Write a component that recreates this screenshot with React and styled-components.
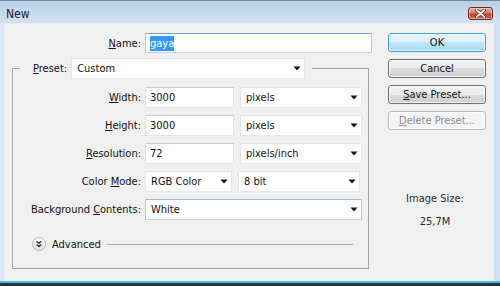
import React from 'react';
import styled, { createGlobalStyle } from 'styled-components';

const Global = createGlobalStyle`
  html, body { margin: 0; padding: 0; background: #fff; }
  body {
    font-family: "DejaVu Sans Condensed", "DejaVu Sans", sans-serif;
    font-stretch: condensed;
    font-size: 11px;
    color: #111;
  }
  * { box-sizing: border-box; }
`;

const Window = styled.div`
  width: 500px;
  height: 286px;
  display: flex;
  flex-direction: column;
  background: #c6d9ee;
  border-top: 1px solid #7b8794;
  overflow: hidden;
`;

const TitleBar = styled.div`
  height: 22px;
  flex: none;
  display: flex;
  align-items: center;
  justify-content: space-between;
  padding: 3px 7px 0 6px;
  background: linear-gradient(#b9d0e9, #d3e2f2);
`;

const Title = styled.span`
  font-family: "DejaVu Sans", sans-serif;
  font-stretch: condensed;
  font-size: 12px;
  color: #1a1a1a;
`;

const CloseButton = styled.div`
  width: 25px;
  height: 13px;
  border: 1px solid #6e2b22;
  border-radius: 3px;
  background: linear-gradient(#e8b2a6 0%, #d27a6a 45%, #c1432f 55%, #d46a4c 100%);
  box-shadow: inset 0 0 0 1px rgba(255, 220, 210, 0.5);
  display: flex;
  align-items: center;
  justify-content: center;
`;

const Frame = styled.div`
  flex: 1;
  display: flex;
  padding: 0 7px 0 4px;
  background: linear-gradient(90deg, #dbe8f5, #cfe0f1);
`;

const Content = styled.div`
  flex: 1;
  display: flex;
  gap: 16px;
  padding: 9px 7px 0 7px;
  background: #f0f0f0;
  border: 1px solid #e6edf4;
  border-bottom: none;
`;

const BottomEdge = styled.div`
  height: 5px;
  flex: none;
  border-top: 2px solid #3cc4ee;
  background: #2f3236;
`;

const LeftCol = styled.div`
  width: 360px;
  display: flex;
  flex-direction: column;
`;

const RightCol = styled.div`
  width: 98px;
  display: flex;
  flex-direction: column;
  gap: 7px;
`;

const NameRow = styled.div`
  display: flex;
  align-items: center;
  height: 20px;
`;

const Label = styled.label`
  width: ${(p) => p.$width || 128}px;
  flex: none;
  text-align: right;
  margin-right: 4px;
  white-space: nowrap;
`;

const TextBox = styled.div`
  width: ${(p) => p.$width}px;
  height: ${(p) => p.$height || 21}px;
  flex: none;
  display: flex;
  align-items: center;
  padding-left: 4px;
  background: #fff;
  border: 1px solid;
  border-color: ${(p) =>
    p.$focused ? '#6fa6d9 #a9cdee #b5d5f1 #a9cdee' : '#c9c9c9 #e3e3e3 #e6e6e6 #e0e0e0'};
  white-space: nowrap;
`;

const Selected = styled.span`
  background: #3399ff;
  color: #fff;
  padding: 1px 0;
`;

const Select = styled.div`
  width: ${(p) => p.$width}px;
  height: 21px;
  flex: none;
  display: flex;
  align-items: center;
  justify-content: space-between;
  padding: 0 3px 0 5px;
  background: #fff;
  border: 1px solid;
  border-color: ${(p) =>
    p.$active ? '#8ebde6 #a9cdee #b5d5f1 #a9cdee' : '#e4e4e4 #e6e6e6 #e8e8e8 #e4e4e4'};
  white-space: nowrap;
`;

const Arrow = () => (
  <svg width="8" height="5" viewBox="0 0 8 5">
    <path d="M0.5 0.5 H7.5 L4 4.5 Z" fill="#111" />
  </svg>
);

const Group = styled.fieldset`
  margin: 5px 0 0 0;
  width: 357px;
  padding: 8px 6px 17px 0;
  border: 1px solid #a3a3a3;
  min-width: 0;
`;

const Legend = styled.legend`
  margin-left: 7px;
  padding: 0 7px 0 13px;
`;

const LegendInner = styled.div`
  display: flex;
  align-items: center;
  gap: 4px;
  height: 21px;
`;

const Rows = styled.div`
  display: flex;
  flex-direction: column;
  gap: 7px;
`;

const Row = styled.div`
  display: flex;
  align-items: center;
  height: 21px;
`;

const Fields = styled.div`
  display: flex;
  gap: 6px;
`;

const AdvancedRow = styled.div`
  margin-top: 17px;
  padding: 0 9px 0 19px;
  height: 14px;
  display: flex;
  align-items: center;
  gap: 6px;
`;

const Rule = styled.div`
  flex: 1;
  height: 1px;
  background: #a8a8a8;
  margin-left: 0;
`;

const Button = styled.div`
  height: 19px;
  display: flex;
  align-items: center;
  justify-content: center;
  border-radius: 3px;
  border: 1px solid ${(p) => (p.$default ? '#3c9fd6' : p.$disabled ? '#b5b9bc' : '#707070')};
  color: ${(p) => (p.$disabled ? '#8d8d8d' : '#111')};
  background: ${(p) =>
    p.$default
      ? 'linear-gradient(#eaf6fd 0%, #d9f0fc 50%, #bee6fd 50%, #a7d9f5 100%)'
      : p.$disabled
      ? '#f4f4f4'
      : 'linear-gradient(#f2f2f2 0%, #ebebeb 50%, #dddddd 50%, #cfcfcf 100%)'};
  box-shadow: inset 0 0 0 1px ${(p) => (p.$disabled ? '#fbfbfb' : 'rgba(255,255,255,0.7)')};
`;

const InfoBlock = styled.div`
  margin-top: 55px;
  display: flex;
  flex-direction: column;
  align-items: center;
  gap: 10px;
  color: #2a2a2a;
  padding-right: 4px;
`;

const AdvancedIcon = () => (
  <svg width="14" height="14" viewBox="0 0 14 14">
    <defs>
      <linearGradient id="adv" x1="0" y1="0" x2="0" y2="1">
        <stop offset="0" stopColor="#ffffff" />
        <stop offset="1" stopColor="#e2e2e2" />
      </linearGradient>
    </defs>
    <circle cx="7" cy="7" r="6.5" fill="url(#adv)" stroke="#b4b4b4" />
    <path d="M4.6 4.2 L7 6.4 L9.4 4.2 M4.6 7.4 L7 9.6 L9.4 7.4" fill="none" stroke="#2a2a2a" strokeWidth="1.3" />
  </svg>
);

const CloseX = () => (
  <svg width="11" height="9" viewBox="0 0 11 9">
    <path d="M1.5 1 L9.5 8 M9.5 1 L1.5 8" stroke="#5a1d15" strokeWidth="3.2" strokeLinecap="round" />
    <path d="M1.5 1 L9.5 8 M9.5 1 L1.5 8" stroke="#fff" strokeWidth="1.8" strokeLinecap="round" />
  </svg>
);

export default function App() {
  return (
    <>
      <Global />
      <Window>
        <TitleBar>
          <Title>New</Title>
          <CloseButton>
            <CloseX />
          </CloseButton>
        </TitleBar>
        <Frame>
          <Content>
            <LeftCol>
              <NameRow>
                <Label $width={129}>
                  <u>N</u>ame:
                </Label>
                <TextBox $width={227} $height={20} $focused>
                  <Selected>gaya</Selected>
                </TextBox>
              </NameRow>
              <Group>
                <Legend>
                  <LegendInner>
                    <span>
                      <u>P</u>reset:
                    </span>
                    <Select $width={234}>
                      Custom
                      <Arrow />
                    </Select>
                  </LegendInner>
                </Legend>
                <Rows>
                  <Row>
                    <Label>
                      <u>W</u>idth:
                    </Label>
                    <Fields>
                      <TextBox $width={89}>3000</TextBox>
                      <Select $width={122}>
                        pixels
                        <Arrow />
                      </Select>
                    </Fields>
                  </Row>
                  <Row>
                    <Label>
                      <u>H</u>eight:
                    </Label>
                    <Fields>
                      <TextBox $width={89}>3000</TextBox>
                      <Select $width={122}>
                        pixels
                        <Arrow />
                      </Select>
                    </Fields>
                  </Row>
                  <Row>
                    <Label>
                      <u>R</u>esolution:
                    </Label>
                    <Fields>
                      <TextBox $width={89}>72</TextBox>
                      <Select $width={122}>
                        pixels/inch
                        <Arrow />
                      </Select>
                    </Fields>
                  </Row>
                  <Row>
                    <Label>
                      Color <u>M</u>ode:
                    </Label>
                    <Fields>
                      <Select $width={87}>
                        RGB Color
                        <Arrow />
                      </Select>
                      <Select $width={122}>
                        8 bit
                        <Arrow />
                      </Select>
                    </Fields>
                  </Row>
                  <Row>
                    <Label>
                      Background <u>C</u>ontents:
                    </Label>
                    <Select $width={217} $active>
                      White
                      <Arrow />
                    </Select>
                  </Row>
                </Rows>
                <AdvancedRow>
                  <AdvancedIcon />
                  <span>Advanced</span>
                  <Rule />
                </AdvancedRow>
              </Group>
            </LeftCol>
            <RightCol>
              <Button $default>OK</Button>
              <Button>Cancel</Button>
              <Button>
                <span>
                  <u>S</u>ave Preset...
                </span>
              </Button>
              <Button $disabled>
                <span>
                  <u>D</u>elete Preset...
                </span>
              </Button>
              <InfoBlock>
                <span>Image Size:</span>
                <span>25,7M</span>
              </InfoBlock>
            </RightCol>
          </Content>
        </Frame>
        <BottomEdge />
      </Window>
    </>
  );
}
